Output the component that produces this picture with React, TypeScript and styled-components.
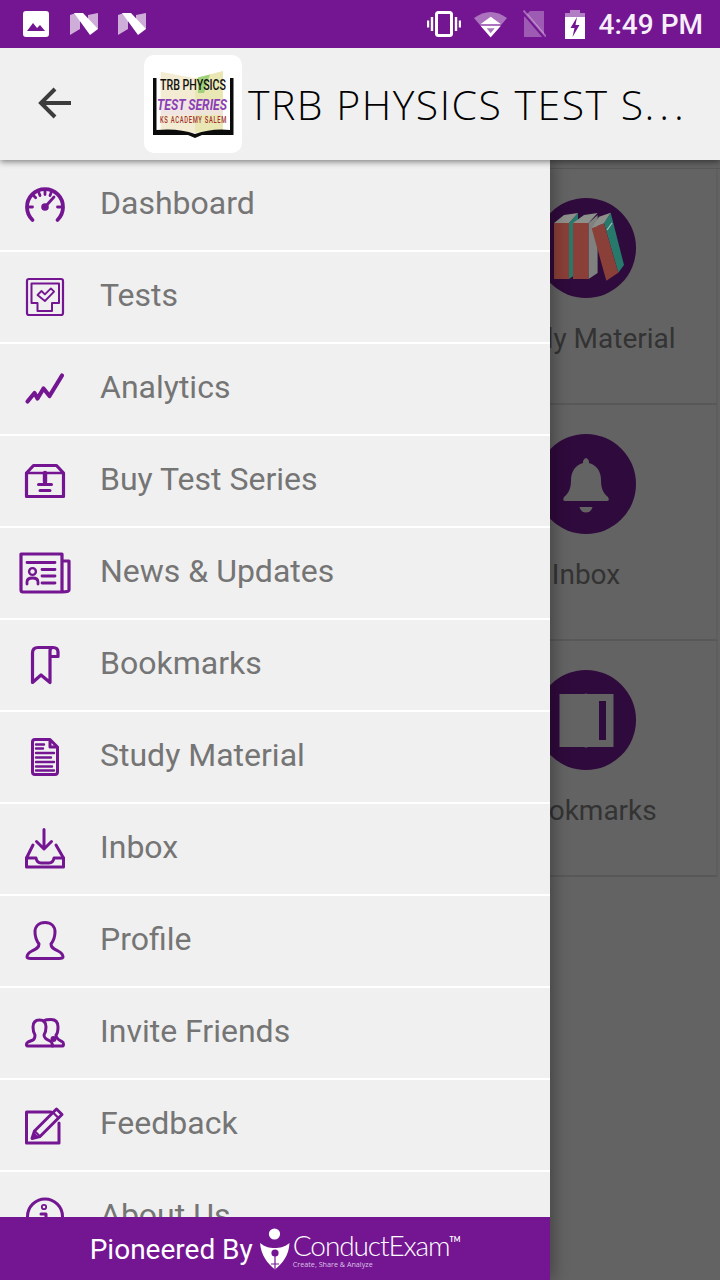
import React from 'react'
import styled, { createGlobalStyle } from 'styled-components'

const PURPLE = '#741592'

const GlobalStyle = createGlobalStyle`
  html, body {
    margin: 0;
    padding: 0;
    background: #636363;
    font-family: Roboto, "Liberation Sans", sans-serif;
  }
`

const menuItems: { label: string; icon: React.ReactNode }[] = [
  {
    label: 'Dashboard',
    icon: (
      <>
        <path d="M17.5 45A18 18 0 1 1 42.5 45" strokeWidth="3.8" />
        <path d="M14.5 32h3M18.5 20.5l2.2 2.2M30 16.5v3M24 18l1 2.6M36 18l-1 2.6M45.5 32h-3" strokeWidth="2.8" />
        <path d="M30 32l9-10" strokeWidth="2.8" />
        <circle cx="30" cy="32" r="3.8" fill={PURPLE} stroke="none" />
      </>
    ),
  },
  {
    label: 'Tests',
    icon: (
      <>
        <rect x="12" y="12" width="36" height="36" rx="2" strokeWidth="2.2" />
        <path d="M16.5 16.5H44V36H37V44H22.5V36H16.5Z" strokeWidth="2" />
        <path d="M22.5 28l4-4 3.4 3.4 6-6 3.2 3.2-9.2 9.4z" strokeWidth="1.8" />
      </>
    ),
  },
  {
    label: 'Analytics',
    icon: <path d="M12.5 42.5L19.5 34L22.5 39.5L28.5 29.5L34.5 37L47 16.5" strokeWidth="4.2" />,
  },
  {
    label: 'Buy Test Series',
    icon: (
      <>
        <path d="M11.5 22L18.5 14.5H41.5L48.5 22V45.5H11.5Z" strokeWidth="3.2" />
        <path d="M11.5 22H48.5" strokeWidth="2.6" />
        <path d="M30 22V31" strokeWidth="4.4" />
        <path d="M23.5 33.5H36.5M25 39.5H35" strokeWidth="3" />
      </>
    ),
  },
  {
    label: 'News & Updates',
    icon: (
      <>
        <path d="M47 49H8Q6 49 6 47V11H47V49Q54 49 54 47V18H47" strokeWidth="3.2" />
        <path d="M12 19.5H40M27 26.5H40M27 33H40M27 40H40" strokeWidth="2.8" />
        <circle cx="17.5" cy="28.5" r="3.4" strokeWidth="2.4" />
        <path d="M12 41V39Q12 35 17.5 35Q23 35 23 39V41" strokeWidth="2.8" />
      </>
    ),
  },
  {
    label: 'Bookmarks',
    icon: <path d="M35 21.5H43V17Q43 12.5 38 12.5H23Q17.5 12.5 17.5 18V47.5L26 40L35 47.5V16Q35 12.5 38 12.5" strokeWidth="3.2" />,
  },
  {
    label: 'Study Material',
    icon: (
      <>
        <path d="M35 12.5H20Q17.5 12.5 17.5 15V45Q17.5 47.5 20 47.5H40Q42.5 47.5 42.5 45V20ZM35 12.5V20H42.5" strokeWidth="3" />
        <path d="M21 17.5H29M21 21.5H28M21 26H39M21 30.5H36M21 35H39M21 39.5H37M21 43.5H39" strokeWidth="2.4" />
      </>
    ),
  },
  {
    label: 'Inbox',
    icon: (
      <>
        <path d="M29 10.5V29.5M21.5 22.5L29 30L36.5 22.5" strokeWidth="3" />
        <path d="M18 26L11.5 39V48H48.5V39L41 26" strokeWidth="3" />
        <path d="M11.5 39H21Q22 44 26 44H34Q38 44 39 39H48.5" strokeWidth="3" />
      </>
    ),
  },
  {
    label: 'Profile',
    icon: (
      <path
        d="M24 33C21 29 20 25 20 21C20 15 24 11.5 30 11.5C36 11.5 40 15 40 21C40 25 39 29 36 33C36 37 39 38 43 40C47 42 48 44 48 46C48 47.5 46 47.5 44 47.5H16C14 47.5 12 47.5 12 46C12 44 13 42 17 40C21 38 24 37 24 33Z"
        strokeWidth="3"
      />
    ),
  },
  {
    label: 'Invite Friends',
    icon: (
      <>
        <path
          d="M20 32C18 29 18 27 18 24C18 19 20 17 24.5 17C29 17 31 19 31 24C31 27 31 29 29 32C29 35 31 36 35 38C37 39 37.5 40 37.5 43H12.5C11 43 11 40 13 39L18 37C20 36 20 34 20 32Z"
          strokeWidth="3"
        />
        <path
          d="M29.5 17.5C31 16.5 33 16.5 36 16.5C41 16.5 43 19 43 24C43 28 43 30 41 32C41 36 44 37 47 38.5C49 39.5 49 43 47 43H37.5"
          strokeWidth="3"
        />
        <circle cx="38.5" cy="36" r="3" fill={PURPLE} stroke="none" />
      </>
    ),
  },
  {
    label: 'Feedback',
    icon: (
      <>
        <path d="M36 17H11.5V48H44V28" strokeWidth="3" />
        <path d="M41.5 14L47 19.5L25 41.5L17 43.5L19.5 36Z" strokeWidth="3" />
        <path d="M38 17.5L43.5 23M19.5 36L25 41.5" strokeWidth="2.2" />
        <path d="M17 43.5L19 38L23 42Z" fill={PURPLE} strokeWidth="1" />
      </>
    ),
  },
  {
    label: 'About Us',
    icon: (
      <>
        <circle cx="30" cy="29.5" r="17.5" strokeWidth="3" />
        <circle cx="29" cy="20" r="2.2" strokeWidth="1.8" />
        <path d="M26 27H31V36" strokeWidth="3" />
      </>
    ),
  },
]

const cards = ['Study Material', 'Inbox', 'Bookmarks']

function CardGlyph({ name }: { name: string }) {
  if (name === 'Inbox') {
    return (
      <GlyphSvg viewBox="0 0 100 100">
        <path
          fill="#636363"
          d="M47 27Q50 21 53 27V29C61 31 65 38 65 46C65 54 67 59 72 63Q74 67 71 67H29Q26 67 28 63C33 59 35 54 35 46C35 38 39 31 47 29Z"
        />
        <path fill="#636363" d="M43.5 73H56.5Q55 78.5 50 78.5Q45 78.5 43.5 73Z" />
      </GlyphSvg>
    )
  }
  if (name === 'Bookmarks') {
    return (
      <GlyphSvg viewBox="0 0 100 100">
        <path fill="#636363" d="M23.5 24H48Q50 23 52 24H77.5V77H52Q50 78 48 77H23.5Z" />
        <rect x="63" y="31" width="7" height="39" fill="#2f0a3c" />
      </GlyphSvg>
    )
  }
  return (
    <GlyphSvg viewBox="0 0 100 100">
      <path fill="#8a3f38" d="M18 25H33V81H18Z" />
      <path fill="#27796c" d="M33 25L42 15V75L33 81Z" />
      <path fill="#8d8f8a" d="M18 25L28 17L42 15L33 25Z" />
      <path fill="#8a3f38" d="M37 25H52.6V81H37Z" />
      <path fill="#7f817e" d="M52.6 25L61.6 17V75L52.6 81Z" />
      <path fill="#8d8f8a" d="M37 25L48 17L61.6 15L52.6 25Z" />
      <path fill="#27796c" d="M68 25.3L74.7 14.7L88 67L82.3 74.7Z" />
      <path fill="#8a3f38" d="M55.7 30.3L68 25.3L82.3 74.7L70.3 82.7Z" />
      <path fill="#8d8f8a" d="M55.7 30.3L63 18.7L74.7 14.7L68 25.3Z" />
      <path stroke="#a9c7c0" strokeWidth="1.2" d="M71 32L76 25" />
    </GlyphSvg>
  )
}

export default function App() {
  return (
    <>
      <GlobalStyle />
      <Screen>
        <StatusBar>
          <StatusGroup>
            <StatusSvg width="26" height="26" viewBox="0 0 26 26">
              <rect width="26" height="26" rx="3" fill="#fff" />
              <path d="M4 20L10 12L14 17L17 14L22 20Z" fill={PURPLE} />
            </StatusSvg>
            <NLogo />
            <NLogo />
          </StatusGroup>
          <StatusGroup>
            <StatusSvg $gap={0} width="34" height="26" viewBox="0 0 34 26">
              <rect x="9.5" y="1.5" width="15" height="23" rx="2" fill="none" stroke="#fff" strokeWidth="3" />
              <path d="M1 9.5V16.5M5 6V20M29 6V20M33 9.5V16.5" stroke="#fff" strokeWidth="2.4" />
            </StatusSvg>
            <StatusSvg $gap={13} width="33" height="28" viewBox="0 0 33 28">
              <path d="M0 8Q16.5 -4 33 8L16.5 27.5Z" fill="#fff" fillOpacity=".4" />
              <path d="M16.7 6.7L26.7 14H6.7Z M6.7 16H26.7L16.7 27.3Z" fill="#fff" />
              <path d="M12.7 18.3H20.7L16.7 23.3Z" fill="#a878bd" />
            </StatusSvg>
            <StatusSvg $gap={15} width="24" height="28" viewBox="0 0 24 28">
              <path d="M8 1H22V27H2V7Z" fill="#fff" fillOpacity=".3" />
              <path d="M0 1L23 28" stroke={PURPLE} strokeWidth="3" />
              <path d="M1.5 0.5L24 26.5" stroke="#fff" strokeOpacity=".35" strokeWidth="2" />
            </StatusSvg>
            <StatusSvg $gap={19} width="20" height="29" viewBox="0 0 20 29">
              <path d="M5 0H15V3H20V29H0V3H5Z" fill="#fff" fillOpacity=".45" />
              <path d="M0 7H20V29H0Z" fill="#fff" />
              <path d="M12 7L5.5 18H9.5L7.5 27L14.5 15H10.5Z" fill={PURPLE} />
            </StatusSvg>
            <Clock>4:49 PM</Clock>
          </StatusGroup>
        </StatusBar>

        <Toolbar>
          <BackIcon width="34" height="34" viewBox="0 0 34 34">
            <path d="M33 17H3M17 3L3 17L17 31" />
          </BackIcon>
          <LogoTile>
            <svg width="98" height="98" viewBox="0 0 98 98">
              <path d="M16.7 16.7L51 23.3V78L16.7 75Z" fill="#f3ecd2" />
              <path d="M51 23.3L79 16V75L51 78Z" fill="#e9e7b4" />
              <path d="M54 22.5L66 19.5L60 38H54Z" fill="#9fd07a" />
              <path d="M16.7 45H79V60H16.7Z" fill="#efe3ea" fillOpacity=".7" />
              <path d="M9 23H12.5V75Q35 73 51 79Q68 73 86 75V23H89.5V80H58L51 83L44 80H9Z" fill="#0b0b0b" />
              <LogoText x="16" y="35" textLength="66" lengthAdjust="spacingAndGlyphs" fontSize="14.5" fill="#111" fontWeight="500">
                TRB PHYSICS
              </LogoText>
              <LogoText x="13" y="55" textLength="70" lengthAdjust="spacingAndGlyphs" fontSize="14.5" fill="#8a3fb5" fontWeight="700" fontStyle="italic">
                TEST SERIES
              </LogoText>
              <LogoText x="16" y="68" textLength="67" lengthAdjust="spacingAndGlyphs" fontSize="8.4" letterSpacing="1" fill="#a33030" fontWeight="500">
                KS ACADEMY SALEM
              </LogoText>
            </svg>
          </LogoTile>
          <Title>
            TRB PHYSICS TEST S<Dots>...</Dots>
          </Title>
        </Toolbar>

        <Body>
          <CardGrid>
            {cards.map((name) => (
              <Card key={name}>
                <CardCircle>
                  <CardGlyph name={name} />
                </CardCircle>
                <CardLabel>{name}</CardLabel>
              </Card>
            ))}
          </CardGrid>

          <Drawer>
            <MenuList>
              {menuItems.map((item) => (
                <MenuRow key={item.label}>
                  <MenuIcon viewBox="0 0 60 60">{item.icon}</MenuIcon>
                  <MenuLabel>{item.label}</MenuLabel>
                </MenuRow>
              ))}
            </MenuList>
            <Footer>
              <FooterText>Pioneered By</FooterText>
              <svg width="30" height="42" viewBox="0 0 30 42">
                <circle cx="14.5" cy="6" r="5.6" fill="#fff" />
                <path d="M0 15C5 19 9 20 14.5 20C20 20 25 19 29.5 15C29 27 23 35 15 41.5C7 35 1 27 0 15Z" fill="#fff" />
                <circle cx="15" cy="25" r="3.6" fill={PURPLE} />
                <path d="M15 27V41M11 36H19" stroke={PURPLE} strokeWidth="1.2" />
              </svg>
              <Brand>
                <BrandName>
                  ConductExam<BrandMark>TM</BrandMark>
                </BrandName>
                <BrandTag>Create, Share &amp; Analyze</BrandTag>
              </Brand>
            </Footer>
          </Drawer>
        </Body>
      </Screen>
    </>
  )
}

function NLogo() {
  return (
    <StatusSvg width="28" height="24" viewBox="0 0 28 24">
      <path d="M0 3L6 1L10 8V17L0 23Z" fill="#fff" fillOpacity=".65" />
      <path d="M18 3L28 1V17L18 13Z" fill="#fff" fillOpacity=".65" />
      <path d="M4 1H13L28 17L20 23Z" fill="#fff" />
    </StatusSvg>
  )
}

const Screen = styled.div`
  width: 720px;
  height: 1280px;
  display: flex;
  flex-direction: column;
  overflow: hidden;
`

const StatusBar = styled.div`
  height: 48px;
  flex: none;
  background: ${PURPLE};
  display: flex;
  align-items: center;
  justify-content: space-between;
  padding: 0 17px 0 23px;
  position: relative;
  z-index: 3;
`

const StatusGroup = styled.div`
  display: flex;
  align-items: center;
  gap: 20.5px;

  &:last-child {
    gap: 0;
  }
`

const StatusSvg = styled.svg<{ $gap?: number }>`
  display: block;
  flex: none;
  margin-left: ${(p) => p.$gap ?? 0}px;
`

const Clock = styled.div`
  color: #f6eef9;
  font-size: 28px;
  font-weight: 500;
  margin-left: 14px;
`

const Toolbar = styled.div`
  height: 112px;
  flex: none;
  background: #f0f0f0;
  display: flex;
  align-items: center;
  padding-left: 38px;
  box-shadow: 0 2px 6px rgba(0, 0, 0, 0.45);
  position: relative;
  z-index: 2;
`

const BackIcon = styled.svg`
  flex: none;
  fill: none;
  stroke: #3c3c3c;
  stroke-width: 4;
  margin-top: -2px;
`

const LogoTile = styled.div`
  width: 98px;
  height: 98px;
  flex: none;
  margin-left: 72px;
  background: #fff;
  border-radius: 10px;
`

const LogoText = styled.text`
  font-family: Roboto, sans-serif;
`

const Title = styled.div`
  margin-left: 6px;
  font-family: "Open Sans", sans-serif;
  font-weight: 300;
  font-size: 41px;
  letter-spacing: 1.5px;
  color: #000;
  white-space: nowrap;
`

const Dots = styled.span`
  letter-spacing: 5px;
`

const Body = styled.div`
  flex: 1;
  position: relative;
  background: #636363;
  padding-top: 8px;
`

const CardGrid = styled.div`
  display: flex;
  flex-direction: column;
  align-items: flex-end;
  padding-right: 2px;
  border-top: 1px solid #585858;
`

const Card = styled.div`
  width: 262px;
  height: 236px;
  box-sizing: border-box;
  padding-top: 29px;
  display: flex;
  flex-direction: column;
  align-items: center;
  border-bottom: 2px solid #585858;
  border-right: 2px solid #5e5e5e;
`

const CardCircle = styled.div`
  width: 100px;
  height: 100px;
  border-radius: 50%;
  background: #2f0a3c;
  overflow: hidden;
`

const GlyphSvg = styled.svg`
  display: block;
  width: 100px;
  height: 100px;
`

const CardLabel = styled.div`
  margin-top: 24px;
  font-size: 28px;
  line-height: 34px;
  color: #333;
  white-space: nowrap;
`

const Drawer = styled.div`
  position: absolute;
  top: 0;
  left: 0;
  bottom: 0;
  width: 550px;
  display: flex;
  flex-direction: column;
  background: #f0f0f0;
  box-shadow: 4px 0 14px rgba(0, 0, 0, 0.3);
`

const MenuList = styled.div`
  flex: 1;
  min-height: 0;
  overflow: hidden;
`

const MenuRow = styled.div`
  height: 90px;
  border-bottom: 2px solid #fff;
  display: flex;
  align-items: center;
  gap: 25px;
  padding-left: 15px;
`

const MenuIcon = styled.svg`
  width: 60px;
  height: 60px;
  flex: none;
  fill: none;
  stroke: ${PURPLE};
  stroke-linecap: round;
  stroke-linejoin: round;
`

const MenuLabel = styled.div`
  font-size: 32px;
  color: #757575;
  margin-top: -4px;
  white-space: nowrap;
`

const Footer = styled.div`
  height: 63px;
  flex: none;
  background: ${PURPLE};
  display: flex;
  align-items: center;
  justify-content: center;
  gap: 7px;
`

const FooterText = styled.div`
  color: #fff;
  font-size: 28px;
  margin-top: 2px;
`

const Brand = styled.div`
  display: flex;
  flex-direction: column;
  margin-left: -4px;
  margin-top: 3px;
  color: #fff;
`

const BrandName = styled.div`
  font-family: Lato, sans-serif;
  font-weight: 300;
  font-size: 28px;
  line-height: 28px;
  letter-spacing: -1.1px;
  white-space: nowrap;
`

const BrandMark = styled.sup`
  font-size: 7px;
  font-weight: 700;
  vertical-align: 14px;
  line-height: 0;
  letter-spacing: 0;
`

const BrandTag = styled.div`
  font-family: "Open Sans", sans-serif;
  font-size: 7.2px;
  line-height: 10px;
  color: #dcc1e8;
  white-space: nowrap;
`
